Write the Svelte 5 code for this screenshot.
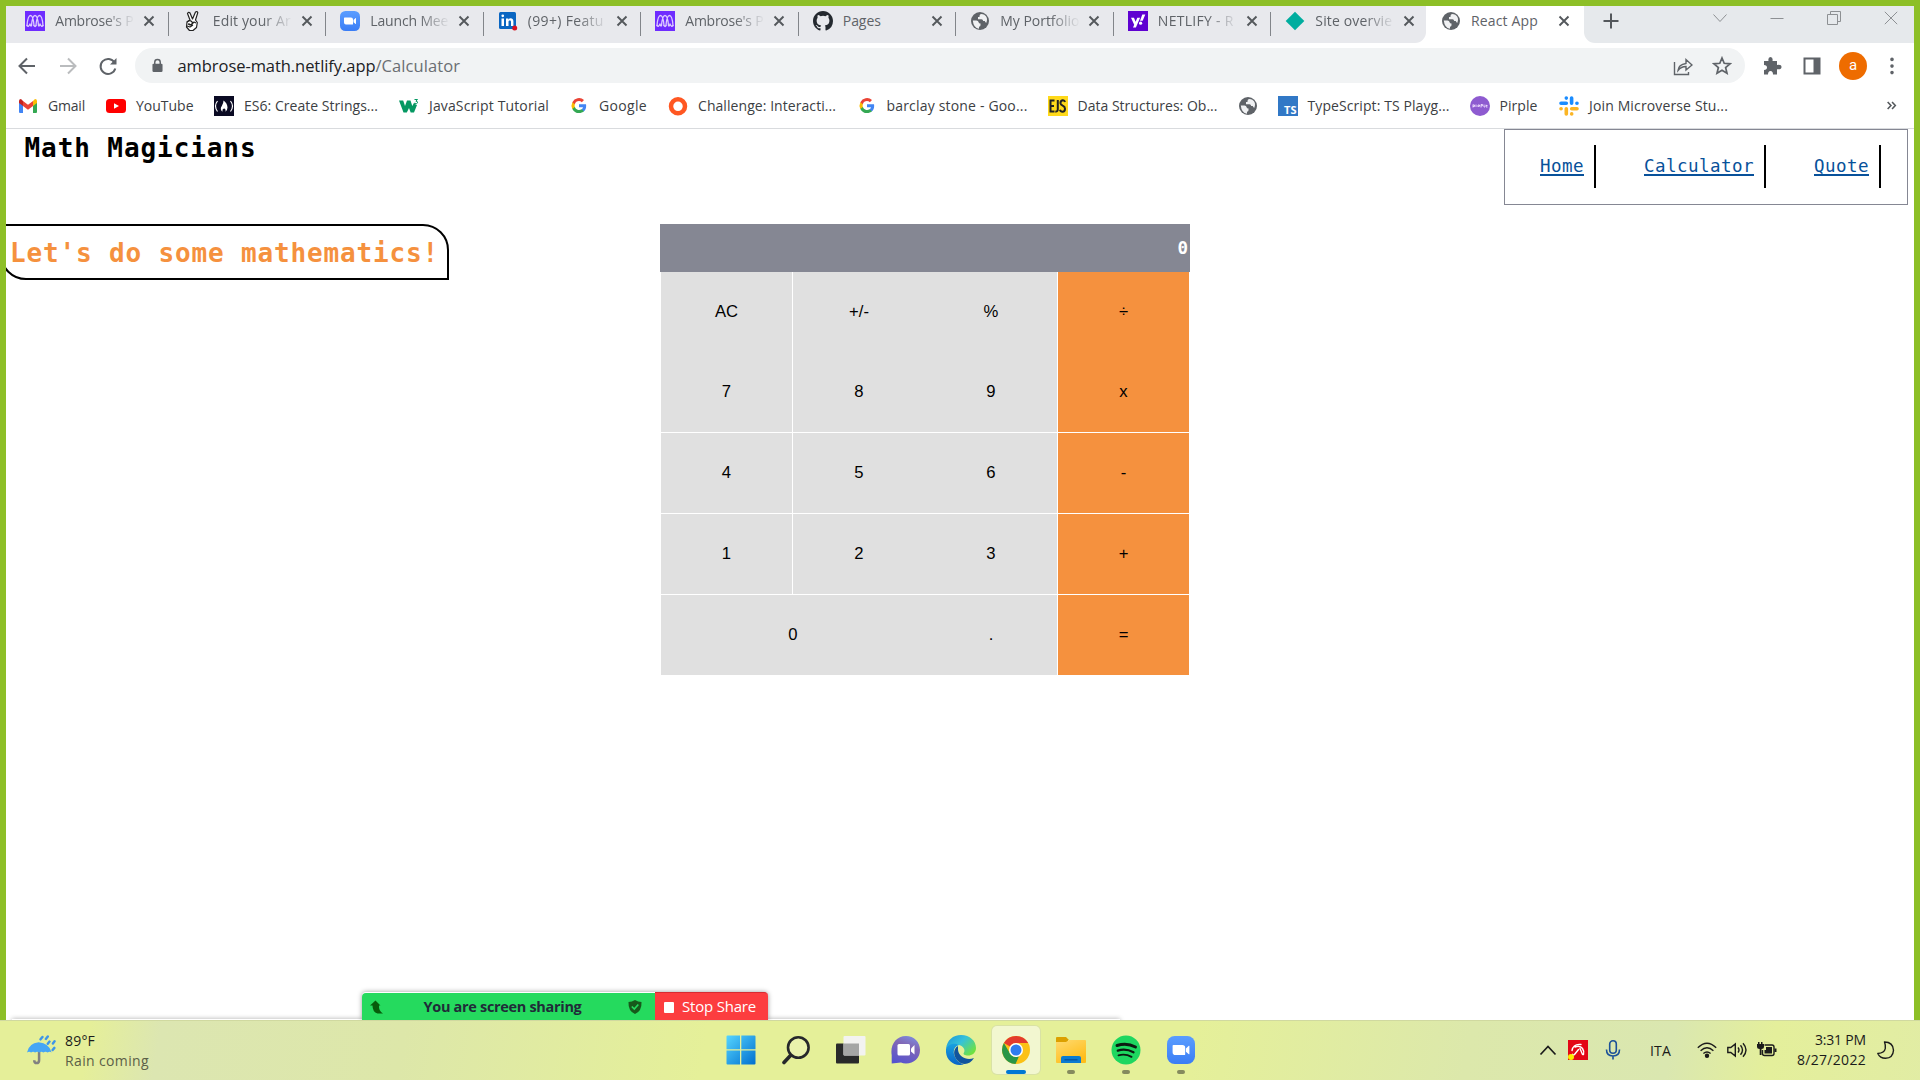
<script>
  const tabs = [
    { icon: 'micro', title: "Ambrose's P", w: 78 },
    { icon: 'hand', title: 'Edit your Ar', w: 78 },
    { icon: 'zoom', title: 'Launch Mee', w: 78 },
    { icon: 'linkedin', title: '(99+) Featu', w: 76 },
    { icon: 'micro', title: "Ambrose's P", w: 78 },
    { icon: 'github', title: 'Pages', w: 38 },
    { icon: 'globe', title: 'My Portfolio', w: 79 },
    { icon: 'yahoo', title: 'NETLIFY - R', w: 76 },
    { icon: 'diamond', title: 'Site overvie', w: 77 }
  ];

  const bookmarks = [
    { icon: 'gmail', label: 'Gmail', w: 37 },
    { icon: 'youtube', label: 'YouTube', w: 57.5 },
    { icon: 'fcc', label: 'ES6: Create Strings...', w: 134 },
    { icon: 'w3', label: 'JavaScript Tutorial', w: 120 },
    { icon: 'google', label: 'Google', w: 48 },
    { icon: 'ring', label: 'Challenge: Interacti...', w: 138 },
    { icon: 'google', label: 'barclay stone - Goo...', w: 141 },
    { icon: 'ejs', label: 'Data Structures: Ob...', w: 140 },
    { icon: 'globe', label: '', w: 0 },
    { icon: 'ts', label: 'TypeScript: TS Playg...', w: 142 },
    { icon: 'pirple', label: 'Pirple', w: 38 },
    { icon: 'slack', label: 'Join Microverse Stu...', w: 139 }
  ];

  const links = [
    { label: 'Home', w: 44 },
    { label: 'Calculator', w: 110 },
    { label: 'Quote', w: 55 }
  ];

  const keys = ['AC', '+/-', '%', '÷', '7', '8', '9', 'x', '4', '5', '6', '-', '1', '2', '3', '+', '0', '.', '='];
  const operators = ['÷', 'x', '-', '+', '='];

  const apps = ['start', 'search', 'tasks', 'chat', 'edge', 'chrome', 'folder', 'spotify', 'zoom'];

  // Spreads a label over a given width by adjusting its letter spacing.
  function fit(node, width) {
    const natural = node.getBoundingClientRect().width;
    node.style.letterSpacing = `${(width - natural) / node.textContent.length}px`;
  }
</script>

{#snippet icon(name)}
  {#if name === 'micro'}
    <svg viewBox="0 0 20 20"><rect width="20" height="20" fill="#6f2cff" /><g fill="none" stroke="#ddccff" stroke-width="1.300" stroke-linecap="round"><path d="M2 14.500C2.500 8.500 3.800 4.500 5.500 4.500S8.500 8.500 9 14.500M6.500 14.500C7 8.500 8.300 4.500 10 4.500s3 4 3.500 10M11 14.500c.5-6 1.800-10 3.500-10s3 4 3.500 10" /><path d="M2 14.500q1.500 2 3-1.500M6.500 14.500q-.8 1.500-1.500-1.500M9 14.500q1.200 2 2 0M13.500 14.500q.8 1.500 1.500-1.500M18 14.500q-1.500 2-3-1.500" /></g></svg>
  {:else if name === 'hand'}
    <svg viewBox="0 0 20 20"><g fill="#fff" stroke="#222" stroke-width="1.200" stroke-linejoin="round"><path d="M7 9 4.500 2.500Q5.500 .500 7 2l2.500 6L12.500 1q1.700-1 2.300.600L12.500 9l1.800 2.500-.8 5L10 19.500H6.500L3.500 16 4 11z" /><path d="M4 11q2-2 4-1l2 2-2.500 2-2-1.500M8 14l3-3 2 1M4 15l3 1 3-2M5 13l2 1" fill="none" /></g></svg>
  {:else if name === 'zoom'}
    <svg viewBox="0 0 20 20"><defs><linearGradient id="zm" x2="0" y2="1"><stop stop-color="#5a9dff" /><stop offset="1" stop-color="#3a7df5" /></linearGradient></defs><rect width="20" height="20" rx="5.500" fill="url(#zm)" /><path d="M4 7q0-.6.6-.6h6.400q2 0 2 2V13q0 .6-.6.6H6q-2 0-2-2zM13.500 8.900 15.600 7q.4-.3.4.2v5.600q0 .5-.4.2l-2.100-1.700z" fill="#fff" /></svg>
  {:else if name === 'linkedin'}
    <svg viewBox="0 0 20 20"><rect x="1" y="1" width="17" height="17" rx="1.500" fill="#0a66c2" /><path d="M3.500 7.500H6V15H3.500zM3.400 4.800a1.350 1.350 0 1 0 2.700 0 1.350 1.350 0 0 0-2.700 0M8 7.500h2.400v1c1.500-2 5-1.500 5 1.800V15H13v-4c0-2-2.500-1.900-2.500 0v4H8z" fill="#fff" /><circle cx="16.700" cy="17" r="2.500" fill="#d9101f" /></svg>
  {:else if name === 'github'}
    <svg viewBox="0 0 16 16"><path fill="#24292f" d="M8 0C3.580 0 0 3.580 0 8c0 3.540 2.290 6.530 5.470 7.590.4.070.55-.17.55-.38 0-.19-.010-.82-.010-1.490-2.010.37-2.530-.49-2.690-.94-.090-.23-.48-.94-.82-1.130-.28-.15-.68-.52-.010-.53.63-.010 1.080.58 1.230.82.72 1.210 1.870.87 2.330.66.070-.52.28-.87.510-1.070-1.780-.2-3.640-.89-3.640-3.950 0-.87.310-1.590.82-2.150-.080-.2-.36-1.020.080-2.120 0 0 .67-.21 2.200.82a7.600 7.600 0 0 1 4 0c1.530-1.040 2.200-.82 2.200-.82.44 1.100.16 1.920.080 2.120.51.56.82 1.270.82 2.150 0 3.070-1.870 3.750-3.650 3.950.29.25.54.73.54 1.480 0 1.070-.010 1.930-.010 2.200 0 .21.15.46.55.38A8 8 0 0 0 16 8c0-4.420-3.580-8-8-8z" /></svg>
  {:else if name === 'globe'}
    <svg viewBox="0 0 20 20"><circle cx="10" cy="10" r="9" fill="#5f6368" /><path d="M2.800 9.500h3.700q1.800 0 2 1.500.2 1.500 2 1.500v1.700q0 1-1.500 1.500v2Q3.500 17 2.800 9.500zM11 2.900q-1.500.6-1.500 2.100v1H8v2.200h3.500q1.500 0 1.700 1.800h1.600q.3 1.700 1.600 1.700 2-5.200-2.100-7.900Q13 3 11 2.900z" fill="#f0f1f3" /></svg>
  {:else if name === 'yahoo'}
    <svg viewBox="0 0 20 20"><rect width="20" height="20" fill="#5f01d1" /><path d="M3 6.800h3l1.600 4 1.700-4h2.800l-4.200 9.700H5l1.200-2.700zM14.300 3.500h3l-2.600 6.300H12z" fill="#fff" /><circle cx="12.600" cy="12.200" r="1.600" fill="#fff" /></svg>
  {:else if name === 'diamond'}
    <svg viewBox="0 0 20 20"><path d="M10 .8 19.300 10 10 19.300.7 10z" fill="#00ad9f" /></svg>
  {:else if name === 'gmail'}
    <svg viewBox="0 0 20 20"><path d="M1 5v11q0 1 1 1h3V8.500z" fill="#4285f4" /><path d="M15 8.500V17h3q1 0 1-1V5z" fill="#34a853" /><path d="M15 5v5l4-3V5q0-2-2-2z" fill="#fbbc04" /><path d="M1 5v2l4 3V5L3 3Q1 3 1 5z" fill="#c5221f" /><path d="M5 10V5l5 3.800L15 5v5l-5 3.800z" fill="#ea4335" /></svg>
  {:else if name === 'youtube'}
    <svg viewBox="0 0 20 20"><rect y="3" width="20" height="14" rx="3.500" fill="#f00" /><path d="M8 7.200v5.600l5-2.800z" fill="#fff" /></svg>
  {:else if name === 'fcc'}
    <svg viewBox="0 0 20 20"><rect width="20" height="20" fill="#0a0a23" /><path d="M3.500 5q-4 5 0 10.500M16.500 5q4 5 0 10.500" fill="none" stroke="#fff" stroke-width="1.200" /><path d="M9.500 4.500q3.800 2.500 4 7 0 2.500-2 4.300.5-3-1.500-3.300-2 .4-1.600 3.300Q5.500 13 7.800 10q1.700-2.500 1.700-5.500z" fill="#fff" /></svg>
  {:else if name === 'w3'}
    <svg viewBox="0 0 20 20"><path d="M0 4.500h4.200L6 10l2-5.500h3.500L13.300 10l1.900-3.500q1 2 2.800 2.500l-3 7.500h-3.300L10 12l-2.200 4.500H4.500z" fill="#059862" /><path d="M15.500 3.500h3l-1.600 1.700q2 .1 1.700 1.600-.8 1.300-2.700.5" fill="none" stroke="#059862" stroke-width="1" /></svg>
  {:else if name === 'google'}
    <svg viewBox="-3 -2.500 24 24"><path fill="#4285f4" d="M17.600 9.200c0-.6-.1-1.200-.2-1.800H9v3.500h4.800a4.100 4.100 0 0 1-1.800 2.700v2.300h3c1.700-1.600 2.600-4 2.600-6.700z" /><path fill="#34a853" d="M9 18c2.400 0 4.500-.8 6-2.200l-3-2.300a5.400 5.400 0 0 1-8-2.800H1V13a9 9 0 0 0 8 5z" /><path fill="#fbbc05" d="M4 10.700a5.400 5.400 0 0 1 0-3.400V5H1a9 9 0 0 0 0 8z" /><path fill="#ea4335" d="M9 3.600c1.300 0 2.500.5 3.400 1.300L15 2.300A9 9 0 0 0 1 5l3 2.300A5.400 5.400 0 0 1 9 3.600z" /></svg>
  {:else if name === 'ring'}
    <svg viewBox="0 0 20 20"><circle cx="10" cy="10.300" r="7" fill="none" stroke="#ff5722" stroke-width="4.500" /></svg>
  {:else if name === 'ejs'}
    <svg viewBox="0 0 20 20"><rect width="20" height="20" fill="#ffd91a" /><path d="M6.500 4.500H2.500v11h4M2.500 10h3.500M9.800 4v9q0 3-2.500 2.500M17 6q-.5-2-2.400-1.700Q12.300 5 12.500 7.200q.3 1.600 2.200 2.500 2.300 1 2.300 3 0 3-2.500 3-2 0-2.500-2" fill="none" stroke="#222" stroke-width="2" /></svg>
  {:else if name === 'pirple'}
    <svg viewBox="0 0 20 20"><circle cx="10" cy="10" r="10" fill="#8e5bd0" /><path d="M3 8.500v3M3 9h1.500v1.500H3M6 8.500V11M8 11V9h1.500v1.300H8M11 11.500v-3h1.500v1.300H11M14 8.500V11h1M16 9.500h1.500M16 8.700V11h1.500" stroke="#f0dfff" fill="none" stroke-width=".9" /></svg>
  {:else if name === 'slack'}
    <svg viewBox="0 0 20 20"><g stroke-width="3.600" stroke-linecap="round" fill="none"><path d="M7.300 2v.1M2 7.200h5.300M12.600 2v5.300M18 7.200h-.1" stroke="#1a8cff" /><path d="M2 12.700h.1M7.300 12.700V18M12.700 18v-.1M12.700 12.700H18" stroke="#fbb524" /></g></svg>
  {:else if name === 'start'}
    <svg viewBox="0 0 30 30"><defs><linearGradient id="wn" x2="1" y2="1"><stop stop-color="#55d5ff" /><stop offset="1" stop-color="#006fcf" /></linearGradient></defs><path fill="url(#wn)" d="M1.500.5H14v13.800H.5V1.500q0-1 1-1zM15.300.5h13.200q1 0 1 1v12.800H15.300zM.5 15.500H14v14H1.500q-1 0-1-1zM15.300 15.500h14.200v13q0 1-1 1H15.300z" /></svg>
  {:else if name === 'search'}
    <svg viewBox="0 0 30 30"><g fill="none" stroke="#26282a" stroke-linecap="round"><circle cx="17.300" cy="12.500" r="10.300" stroke-width="2.600" fill="#ffffff30" /><path d="m9.500 20.500-6.500 7" stroke-width="3.600" /></g></svg>
  {:else if name === 'tasks'}
    <svg viewBox="0 0 30 30"><rect y="8.500" width="23" height="20" rx="1" fill="#292a2a" /><rect x="7.500" y="1" width="22" height="19.500" rx="1" fill="#f3f3f1" /><path d="M7.500 8.500H23v12H8.500q-1 0-1-1z" fill="#a5a6a5" /></svg>
  {:else if name === 'chat'}
    <svg viewBox="0 0 30 30"><defs><linearGradient id="ch" x1=".7" y1="0" x2=".3" y2="1"><stop stop-color="#7e8bdc" /><stop offset=".35" stop-color="#8167b6" /><stop offset="1" stop-color="#5653ce" /></linearGradient></defs><path d="M.7 28.500V20C-1 10 5 1 15 1c8 0 14 6 14 14s-6 13.500-14 13.500q-3 0-5-1z" fill="url(#ch)" /><rect x="6.500" y="9" width="12.500" height="11.500" rx="1.500" fill="#fff" /><path d="m20 13.500 3.500-3.500v9.500L20 16.500z" fill="#fff" /></svg>
  {:else if name === 'edge'}
    <svg viewBox="0 0 30 30"><defs><linearGradient id="e1" x2="1" y2=".7"><stop stop-color="#1993d8" /><stop offset=".5" stop-color="#35c2da" /><stop offset="1" stop-color="#6fe23f" /></linearGradient><linearGradient id="e2" x2="0" y2="1"><stop stop-color="#18a1e0" /><stop offset="1" stop-color="#0a63c6" /></linearGradient></defs><path d="M0 14C1 5 7 0 15 0c9 0 15 6 15 13 0 5-4 7.500-8 7.500-3 0-5.500-1-4-3 1.500-2.500-.5-6.500-5-7.500C7 9 2 11 0 14z" fill="url(#e1)" /><path d="M0 14c2-5 9-6.500 13-4-4 1-6 5-5 9 1.500 6 6 9.500 10 10.500C8 32-1 25 0 14z" fill="url(#e2)" /><path d="M12 11c-5 3-5 9-1 14 5 6 13 5 17-2-7 3-15-1-16-8z" fill="#11549e" /></svg>
  {:else if name === 'chrome'}
    <svg viewBox="0 0 30 30"><circle cx="15" cy="15" r="14" fill="#fbc116" /><path d="M2.900 8A14 14 0 0 1 27.200 8H15a7 7 0 0 0-6 3.500z" fill="#e33b2e" /><path d="M2.900 8 9 18.500a7 7 0 0 0 9 2.800L14.500 29A14 14 0 0 1 2.900 8z" fill="#299647" /><circle cx="15" cy="15" r="7" fill="#fff" /><circle cx="15" cy="15" r="5.500" fill="#2f7cee" /></svg>
  {:else if name === 'folder'}
    <svg viewBox="0 0 30 30"><defs><linearGradient id="fd" x2=".6" y2="1"><stop stop-color="#ffda70" /><stop offset="1" stop-color="#ffbd19" /></linearGradient></defs><path d="M0 3q0-1 1-1h9l3 3h-1v5H0z" fill="#dca000" /><path d="M0 7h10l3-2h16q1 0 1 1v21q0 1-1 1H1q-1 0-1-1z" fill="url(#fd)" /><path d="M5 28v-5q0-2 2-2h16q2 0 2 2v5z" fill="#0b7bd0" /><path d="M8.500 24.800h13" stroke="#06509c" stroke-width="1.200" /></svg>
  {:else if name === 'spotify'}
    <svg viewBox="0 0 30 30"><circle cx="15" cy="15" r="14.500" fill="#1ed760" /><g fill="none" stroke="#0c1a10" stroke-linecap="round"><path d="M6 10.500q10-3 18.500 1.500" stroke-width="2.900" /><path d="M6.800 15.600q8-2.400 15.700 1.600" stroke-width="2.300" /><path d="M7.500 20.300q7-1.800 13 1.500" stroke-width="1.900" /></g></svg>
  {/if}
{/snippet}

<div class="desktop">
  <div class="window">
    <header class="strip">
      <div class="inactive">
        {#each tabs as tab}
          <div class="tab">
            <span class="ico">{@render icon(tab.icon)}</span>
            <span class="title"><span class="txt" use:fit={tab.w}>{tab.title}</span></span>
            <svg class="x" viewBox="0 0 12 12"><path d="m1.500 1.500 9 9m0-9-9 9" /></svg>
          </div>
        {/each}
      </div>
      <div class="tab active">
        <span class="ico">{@render icon('globe')}</span>
        <span class="title plain"><span class="txt" use:fit={67}>React App</span></span>
        <svg class="x" viewBox="0 0 12 12"><path d="m1.500 1.500 9 9m0-9-9 9" /></svg>
      </div>
      <div class="controls">
        <svg class="plus" viewBox="0 0 16 16"><path d="M8 .5v15M.5 8h15" /></svg>
        <div class="winbtns">
          <svg viewBox="0 0 14 14"><path d="m.5 3.500 6.500 7 6.500-7" /></svg>
          <svg viewBox="0 0 14 14"><path d="M.5 7.500h13" /></svg>
          <svg viewBox="0 0 14 14"><path d="M.5 3.500h10V13.500H.5zM3.500 3.500V.5h10v10h-3" /></svg>
          <svg viewBox="0 0 14 14"><path d="m.8.8 12.400 12.400m0-12.400L.8 13.200" /></svg>
        </div>
      </div>
    </header>

    <div class="toolbar">
      <div class="arrows">
        <svg viewBox="0 0 20 20"><path d="M18 10H3m7-7.500L2.500 10l7.500 7.500" /></svg>
        <svg class="dim" viewBox="0 0 20 20"><path d="M2 10h15M10 2.500l7.500 7.500-7.500 7.500" /></svg>
        <svg viewBox="0 0 20 20"><path d="M16.500 6.500A7.500 7.500 0 1 0 17.300 12.500" /><path d="M18.500 2v6.500H12z" fill="#5f6368" stroke="none" /></svg>
      </div>
      <div class="omnibox">
        <svg class="lock" viewBox="0 0 12 15"><path d="M3 6V4a3 3 0 0 1 6 0v2" fill="none" stroke="#5f6368" stroke-width="1.600" /><rect x=".5" y="5.500" width="11" height="9" rx="1.300" fill="#5f6368" /></svg>
        <span class="url"><span class="txt host" use:fit={198}>ambrose-math.netlify.app</span><span class="txt path" use:fit={84.500}>/Calculator</span></span>
        <svg class="line" viewBox="0 0 20 20"><path d="M1.500 6v12.500h14V16M5 14.500q.5-6 8-7V3.500l6 5.500-6 5v-3.500q-5 0-8 4z" /></svg>
        <svg class="star" viewBox="0 0 20 20"><path d="m10 2 2.200 5.300 5.800.5-4.400 3.700L15 17.200 10 14.200 5 17.200l1.400-5.700L2 7.800l5.800-.5z" /></svg>
      </div>
      <div class="actions">
        <svg viewBox="0 0 20 20"><path d="M2 5h4.500q-.7-4 2-4t2 4H15v4q4.500-.8 4.500 2T15 13.200V18.500h-4q0-3.500-2.500-3.500T6 18.500H2V14q3-.3 3-2.500T2 9z" fill="#5f6368" /></svg>
        <svg viewBox="0 0 20 20"><path d="M2.500 2.500h15v15h-15z" fill="none" stroke="#5f6368" stroke-width="2" /><path d="M11.500 2h6v16h-6z" fill="#5f6368" /></svg>
        <span class="avatar">a</span>
        <svg viewBox="0 0 20 20"><path d="M10 3.300v.1M10 10v.1M10 16.500v.1" stroke="#5f6368" stroke-width="3.600" stroke-linecap="round" /></svg>
      </div>
    </div>

    <div class="bookmarks">
      {#each bookmarks as b}
        <div class="bm">
          {#if b.icon === 'ts'}
            <span class="ico ts">TS</span>
          {:else}
            <span class="ico">{@render icon(b.icon)}</span>
          {/if}
          {#if b.label}<span class="txt" use:fit={b.w}>{b.label}</span>{/if}
        </div>
      {/each}
      <svg class="more" viewBox="0 0 10 10"><path d="m1.500 1.800 3 3.200-3 3.200M5.500 1.800l3 3.200-3 3.200" /></svg>
    </div>

    <main>
      <div class="top">
        <h1><span class="txt" use:fit={232}>Math Magicians</span></h1>
        <nav>
          {#each links as l}
            <div class="link"><a href="#top"><span class="txt" use:fit={l.w}>{l.label}</span></a></div>
          {/each}
        </nav>
      </div>
      <div class="content">
        <h2><span class="txt" use:fit={429}>Let's do some mathematics!</span></h2>
        <section class="calc">
          <div class="display">0</div>
          <div class="keys">
            {#each keys as k, i}
              <button class:op={operators.includes(k)} class:zero={k === '0'} class:first={i % 4 === 0 && i < 16} class:row={i > 7}>{k}</button>
            {/each}
          </div>
        </section>
      </div>
    </main>
    <div class="dockshade"></div>
    <div class="share">
      <div class="sharing">
        <svg viewBox="0 0 14 14"><path d="M5.500.5 0 5.500h2.500q0 6.500 5 8H13q-4.500-2.500-4-8h1.500z" fill="#075c0b" /></svg>
        <span class="txt" use:fit={158}>You are screen sharing</span>
        <svg viewBox="0 0 14 14"><path d="M7 0q3 2 6.500 2 .5 9-6.500 12Q0 11 .5 2 4 2 7 0z" fill="#17591b" /><path d="m3.800 6.500 2.500 2.500 4-4.500" fill="none" stroke="#25da5e" stroke-width="1.700" /></svg>
      </div>
      <div class="stop"><i></i><span class="txt" use:fit={74}>Stop Share</span></div>
    </div>
  </div>

  <footer>
    <div class="weather">
      <svg viewBox="0 0 30 30"><path d="M12.500 16v9.500q0 3-2.500 3t-2.500-3" fill="none" stroke="#818181" stroke-width="2.600" /><path d="M0 17.500Q2 8 12 7q11 1 13.500 10.500-2-1.500-4.200 0-2.200-1.500-4.400 0-2.100-1.500-4.200 0-2.200-1.500-4.300 0-2.200-1.500-4.200 0-2-1.500-4.200 0z" fill="#46a6f5" /><path d="m14 4 2-2.500m3.500 2L21.500 1M21.500 8.500l1.800-2.200m3.500 2L28.500 6M26.500 15l1.800-2.200" stroke="#3e96e8" stroke-width="2.500" stroke-linecap="round" /></svg>
      <div><span class="txt" use:fit={30}>89°F</span><span class="txt soft" use:fit={84}>Rain coming</span></div>
    </div>
    <div class="apps">
      {#each apps as a}
        <div class="app" class:current={a === 'chrome'} class:running={['folder', 'spotify', 'zoom'].includes(a)}>{@render icon(a)}</div>
      {/each}
    </div>
    <div class="tray">
      <svg class="chev" viewBox="0 0 18 18"><path d="m1.500 13.500 7.500-8 7.500 8" /></svg>
      <svg class="avira" viewBox="0 0 20 20"><rect width="20" height="20" fill="#e30716" /><path d="M4 10.500C5 5.500 9 4 13 4.500M7 7q5-2 7.500 1.500 2 3 1 6M12 8.500l2.500 6M10.500 9.500l-4 5q-1.200 1.200-2-.2" fill="none" stroke="#fff" stroke-width="1.400" stroke-linecap="round" /><circle cx="3" cy="17" r="3" fill="#fbea00" /></svg>
      <svg class="mic" viewBox="0 0 20 20"><rect x="6.700" y=".8" width="6.600" height="12.500" rx="3.300" /><path d="M3.500 9.500q0 6.500 6.500 6.500t6.500-6.500M10 16v3.500" /></svg>
      <span class="ita"><span class="txt" use:fit={21}>ITA</span></span>
      <svg class="wifi" viewBox="0 0 20 20"><path d="M.8 7.800q9.200-9 18.400 0M3.600 10.800q6.400-6 12.800 0M6.400 13.500q3.600-3.200 7.200 0" /><circle cx="10" cy="15.700" r="1.500" fill="#1b1b1b" /></svg>
      <svg class="vol" viewBox="0 0 20 20"><path d="M.8 7.500h3L8.300 4v12L3.800 12.500h-3zM11 7.500q2 2.500 0 5M13.500 5.300q4 4.700 0 9.400M16 3.200q6 6.800 0 13.600" /></svg>
      <svg class="bat" viewBox="0 0 20 20"><path d="M7.500 5H15q2 0 2 2v6.500q0 2-2 2H7.500q-2 0-2-2V10" /><path d="M9 7h6v6.500H7.500V10H9zM17.500 8.500h2v3.500h-2zM0 4h1V2h1.500v2h1.500V2H5.500v2H7v2.500Q7 9 4.500 9v6H2.700V9Q0 9 0 6.500z" fill="#1b1b1b" stroke="none" /></svg>
      <div class="clock"><span class="txt" use:fit={51}>3:31 PM</span><span class="txt" use:fit={69}>8/27/2022</span></div>
      <svg class="moon" viewBox="0 0 20 20"><path d="M8.500 2Q17 2 17.500 10.200 17 18 9.500 18.300 4 18.300 1.800 13.500 8.500 13 9.300 8.500 9.700 5 8.500 2z" stroke-linejoin="round" /></svg>
    </div>
  </footer>
</div>

<style>
  :global(body) { margin: 0; overflow: hidden; }
  .desktop { width: 1920px; height: 1080px; overflow: hidden; display: flex; flex-direction: column; font-family: "Open Sans", "Noto Sans", sans-serif; color: #3c4043; }
  .desktop *, .desktop { box-sizing: border-box; }
  svg { display: block; flex: none; }
  .txt { display: inline-block; white-space: pre; flex: none; }
  .ico { width: 20px; height: 20px; flex: none; }
  .ico svg { width: 20px; height: 20px; }

  .window { height: 1020px; border: 6px solid #8dbf27; border-bottom: 0; background: #fff; display: flex; flex-direction: column; position: relative; overflow: hidden; }
  .strip { height: 37px; display: flex; flex: none; }
  .inactive { width: 1420px; padding-left: 5.300px; display: flex; background: #e8e9ed; border-bottom-right-radius: 11px; }
  .tab { width: 157.500px; height: 28px; padding: 2px 12px 0 14px; display: flex; align-items: center; position: relative; flex: none; }
  .inactive .tab:not(:last-child)::after { content: ''; position: absolute; right: 0; top: 6px; width: 1px; height: 24px; background: #82858a; }
  .tab.active { width: 158px; padding-left: 15px; }
  .title { margin-left: 10px; width: 80px; flex: none; font-size: 14px; line-height: 22px; color: #5f6368; -webkit-mask-image: linear-gradient(90deg, #000 62%, transparent); mask-image: linear-gradient(90deg, #000 62%, transparent); }
  .title.plain { -webkit-mask-image: none; mask-image: none; }
  .tab.active .title { width: 79px; }
  .inactive .tab:nth-child(6) .title { -webkit-mask-image: none; mask-image: none; }
  .x { width: 12px; height: 12px; margin-left: 8px; stroke: #54585c; stroke-width: 1.900; }
  .controls { flex: 1; display: flex; justify-content: space-between; background: #e6e9ec; border-bottom-left-radius: 11px; padding: 7px 16px 0 19px; }
  .plus { width: 16px; height: 16px; stroke: #54585c; stroke-width: 2; }
  .winbtns { display: flex; gap: 43px; }
  .winbtns svg { width: 14px; height: 14px; margin-top: -2px; fill: none; stroke: #8d9093; stroke-width: 1; }

  .toolbar { height: 45px; display: flex; align-items: center; flex: none; padding: 0 0 0 11px; }
  .arrows { display: flex; gap: 20.500px; width: 118px; flex: none; }
  .arrows svg { width: 20px; height: 20px; fill: none; stroke: #5f6368; stroke-width: 2; }
  .arrows .dim { stroke: #babcbe; }
  .omnibox { width: 1610px; flex: none; height: 35px; border-radius: 18px; background: #f1f3f4; display: flex; align-items: center; padding: 0 13px 0 16.500px; }
  .lock { width: 11px; height: 15px; }
  .url { margin-left: 15px; flex: 1; display: flex; font-size: 16.500px; line-height: 24px; }
  .host { color: #202124; }
  .path { color: #6a6e72; }
  .omnibox .line, .omnibox .star { width: 20px; height: 20px; fill: none; stroke: #5f6368; stroke-width: 1.400; }
  .omnibox .star { margin-left: 19.500px; stroke-width: 1.700; }
  .actions { flex: 1; display: flex; align-items: center; margin-left: 17px; }
  .actions svg { width: 20px; height: 20px; }
  .actions svg:nth-child(2) { margin-left: 20px; }
  .avatar { width: 28px; height: 28px; flex: none; border-radius: 50%; margin: 0 15px 0 17px; background: #ee6c00; color: #fff; font: 15px/27px Roboto, sans-serif; text-align: center; }

  .bookmarks { height: 41px; flex: none; border-bottom: 1px solid #d9dbde; display: grid; grid-template-columns: 88px 108px 185px 170px 99px 188.500px 191px 190px 40px 192px 89.500px 1fr 20px; padding: 0 8px 5px 12px; align-items: center; font-size: 14px; line-height: 20px; }
  .bm { display: flex; gap: 10px; align-items: center; }
  .ts { background: #3178c6; color: #fff; font-size: 11px; font-weight: 700; line-height: 11px; padding-top: 8px; text-align: right; padding-right: 1px; }
  .more { width: 11px; height: 11px; fill: none; stroke: #54585c; stroke-width: 1.400; }

  main { flex: 1; background: #fff; }
  .top { display: flex; justify-content: space-between; height: 95px; padding-right: 6px; }
  h1, h2 { margin: 0; font-family: "DejaVu Sans Mono", monospace; font-weight: 700; font-size: 26px; }
  h1 { padding-left: 18.500px; line-height: 38px; color: #000; }
  nav { width: 404px; height: 76px; border: 1px solid #858793; display: flex; padding: 15px 0 0 35px; gap: 48px; }
  .link { height: 43px; line-height: 43px; border-right: 2px solid #000; padding-right: 10px; flex: none; }
  .link a { font-family: "DejaVu Sans Mono", monospace; font-size: 17.500px; color: #08519a; text-decoration: none; display: flex; }
  .link .txt { border-bottom: 2px solid #08519a; line-height: 23px; height: 21px; margin-top: 10px; }
  .content { display: flex; }
  h2 { width: 449px; height: 56px; margin-left: -6px; border: 2px solid #000; border-radius: 0 26px 0 26px; padding-left: 8px; line-height: 54px; color: #f5913e; }
  .calc { width: 530px; margin-left: 211px; }
  .display { height: 48px; background: #858793; color: #fff; text-align: right; padding-right: 2px; font: 700 17.500px/48px "DejaVu Sans Mono", monospace; }
  .keys { margin: 0 1px; display: grid; grid-template-columns: repeat(4, 132px); grid-template-rows: 79px 81px 81px 81px 81px; }
  button { border: 0; border-radius: 0; padding: 0; margin: 0; background: #e0e0e0; color: #000; font: 16.670px "Liberation Sans", Arial, sans-serif; }
  button.first { border-right: 1px solid #fff; }
  button.row { border-top: 1px solid #fff; }
  button.op { background: #f5913e; border-left: 1px solid #fff; }
  button.zero { grid-column: span 2; }

  .share { position: absolute; left: 356px; bottom: 0; display: flex; align-items: flex-end; box-shadow: 0 0 5px #0006; border-radius: 4px 4px 0 0; line-height: 22px; }
  .dockshade { position: absolute; left: 6px; bottom: -4px; width: 1108px; height: 5px; box-shadow: 0 0 5px #0005; }
  .sharing { width: 293px; height: 27px; background: #25da5e; border-radius: 4px 0 0 0; display: flex; align-items: center; justify-content: space-between; padding: 1px 13px 0 8px; color: #202b38; font-weight: 700; font-size: 14.500px; }
  .sharing svg { width: 14px; height: 14px; }
  .sharing .txt { margin-left: 26px; margin-right: 33px; }
  .stop { width: 113px; height: 28px; background: #fc3d3f; border-top: 1px solid #d82b31; border-radius: 0 4px 0 0; display: flex; align-items: center; padding: 1px 0 0 9px; gap: 8px; color: #fff; font-size: 15px; }
  .stop .txt { margin-top: -2px; }
  .stop i { width: 10px; height: 11px; background: #fff; border-radius: 1px; }

  footer { height: 60px; flex: none; border-top: 1px solid #d0d9a0; background: linear-gradient(100deg, #e5ef99 0, #e5ef99 90px, #dce6b1 160px, #dde7a9 400px, #e5f099 700px, #e5f099 1180px, #dce8ab 1450px, #dae7b0 1650px, #e4ef9b 1750px, #e1eca5 1920px); display: flex; color: #1b1b1b; font-size: 14px; line-height: 20px; }
  .weather { width: 717px; flex: none; display: flex; padding: 9px 0 0 27px; }
  .weather > svg { width: 29px; height: 30px; margin-top: 5px; }
  .weather > div { margin: 1px 0 0 9px; display: flex; flex-direction: column; align-items: flex-start; }
  .soft { color: #5c6048; }
  .apps { display: flex; gap: 7px; padding-top: 5px; width: 491px; flex: none; }
  .app { width: 48px; height: 48px; border-radius: 5px; flex: none; position: relative; padding: 9px; }
  .app svg { width: 30px; height: 30px; }
  .app:last-child svg { width: 28px; height: 28px; margin: 1px; }
  .current { background: #f2f7d0; box-shadow: 0 0 0 1px #d9e2a5; }
  .current::after, .running::after { content: ''; position: absolute; bottom: 0; left: 20px; width: 8px; height: 4px; border-radius: 2px; background: #858b5e; }
  .current::after { left: 14px; width: 20px; background: #0078d4; }
  .tray { flex: 1; display: flex; align-items: center; padding: 0 0 2px 330.500px; }
  .tray svg { fill: none; stroke: #1b1b1b; stroke-width: 1.400; width: 20px; height: 20px; }
  .tray .chev { width: 18px; height: 18px; stroke-width: 1.700; }
  .tray .avira { margin-left: 11px; stroke: none; }
  .tray .mic { margin-left: 15px; stroke: #1b5198; stroke-width: 1.600; }
  .ita { margin-left: 27.500px; width: 21px; margin-top: 3px; }
  .tray .wifi { margin-left: 26px; }
  .tray .vol { margin-left: 10px; }
  .tray .bat { margin-left: 10px; }
  .clock { width: 69px; margin-left: 20px; display: flex; flex-direction: column; align-items: flex-end; }
  .tray .moon { margin-left: 10px; }
</style>
